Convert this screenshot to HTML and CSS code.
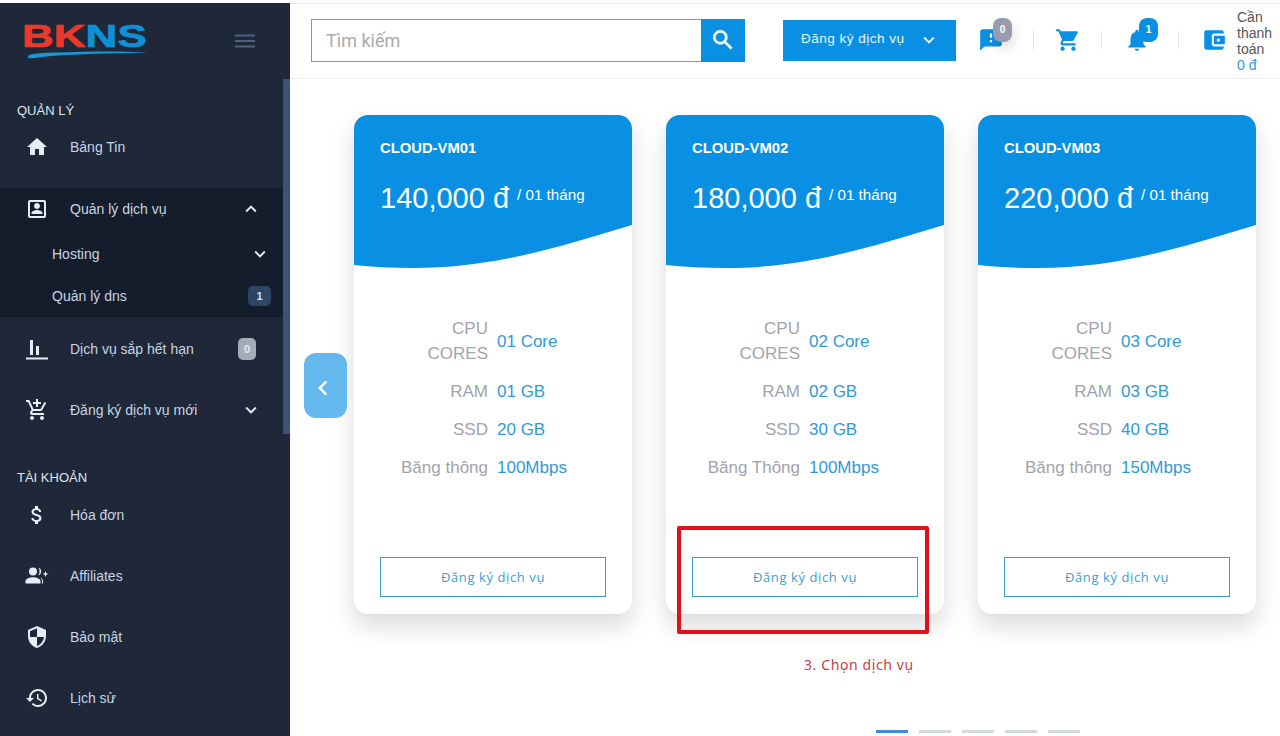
FILE: index.html
```html
<!DOCTYPE html>
<html lang="en">
  <head>
    <meta charset="UTF-8" />
    <meta name="viewport" content="width=device-width, initial-scale=1.0" />
    <title>BKNS | Đăng ký dịch vụ</title>
    <link rel="stylesheet" href="styles.css">
  </head>
  <body>
    <div class="page">
      <aside class="sidebar">
        <div class="scroll-thumb"></div>
        <div class="brand">
          <div class="logo">
            <div class="logo-text"><span class="logo-red">BK</span><span class="logo-blue">NS</span></div>
            <svg class="logo-swoosh" viewBox="0 0 122 9"><path d="M2 8 C1 4 8 3 30 2.500 C60 1.500 95 0.500 122 3 C90 3 50 4 25 6 C12 7.500 4 9 2 8 Z" fill="#1597d8"/></svg>
          </div>
          <svg class="burger" viewBox="0 0 20 14"><path d="M0 1.500h20M0 7h20M0 12.500h20" stroke="#4f6280" stroke-width="2"/></svg>
        </div>

        <div class="section-title first">QUẢN LÝ</div>
        <a class="item item-home">
          <svg class="icon" viewBox="0 0 24 24"><path d="M10 20v-6h4v6h5v-8h3L12 3 2 12h3v8z"/></svg>
          <span>Bảng Tin</span>
        </a>

        <div class="group">
          <a class="item item-parent">
            <svg class="icon" viewBox="0 0 24 24"><path d="M19 5v14H5V5h14m0-2H5c-1.110 0-2 .9-2 2v14c0 1.100.89 2 2 2h14c1.100 0 2-.9 2-2V5c0-1.100-.9-2-2-2zm-7 9c1.650 0 3-1.350 3-3s-1.350-3-3-3-3 1.350-3 3 1.350 3 3 3zm-5.500 5h11v-1c0-2-3.700-3-5.500-3s-5.500 1-5.500 3v1z"/></svg>
            <span>Quản lý dịch vụ</span>
            <svg class="chevron" viewBox="0 0 24 24"><path d="M7.410 15.410 12 10.830l4.590 4.580L18 14l-6-6-6 6z"/></svg>
          </a>
          <a class="sub-item">
            <span>Hosting</span>
            <svg class="chevron" viewBox="0 0 24 24"><path d="M7.410 8.590 12 13.170l4.590-4.580L18 10l-6 6-6-6z"/></svg>
          </a>
          <a class="sub-item">
            <span>Quản lý dns</span>
            <span class="count count-dark">1</span>
          </a>
        </div>

        <a class="item item-expire">
          <svg class="icon" viewBox="0 0 24 24"><path d="M5 3h3v15H5zM11 9h3v9h-3zM1 20.500h22v2H1z"/></svg>
          <span>Dịch vụ sắp hết hạn</span>
          <span class="count count-grey">0</span>
        </a>
        <a class="item">
          <svg class="icon" viewBox="0 0 24 24"><path d="M11 9h2V6h3V4h-3V1h-2v3H8v2h3v3zm-4 9c-1.100 0-1.990.9-1.990 2S5.900 22 7 22s2-.9 2-2-.9-2-2-2zm10 0c-1.100 0-1.990.9-1.990 2s.89 2 1.990 2 2-.9 2-2-.9-2-2-2zm-9.830-3.250.03-.12.9-1.630h7.450c.75 0 1.410-.41 1.750-1.030l3.860-7.010L19.420 4h-.01l-1.100 2-2.760 5H8.530l-.13-.27L6.160 6l-.95-2-.94-2H1v2h2l3.600 7.590-1.350 2.450c-.16.28-.25.61-.25.96 0 1.100.9 2 2 2h12v-2H7.420c-.13 0-.25-.11-.25-.25z"/></svg>
          <span>Đăng ký dịch vụ mới</span>
          <svg class="chevron" viewBox="0 0 24 24"><path d="M7.410 8.590 12 13.170l4.590-4.580L18 10l-6 6-6-6z"/></svg>
        </a>

        <div class="section-title section-account">TÀI KHOẢN</div>
        <a class="item">
          <svg class="icon" viewBox="0 0 24 24"><path d="M11.800 10.900c-2.270-.59-3-1.200-3-2.150 0-1.090 1.010-1.850 2.700-1.850 1.780 0 2.440.85 2.500 2.100h2.210c-.07-1.720-1.120-3.300-3.210-3.810V3h-3v2.160c-1.940.42-3.500 1.680-3.500 3.610 0 2.310 1.910 3.460 4.700 4.130 2.500.6 3 1.480 3 2.410 0 .69-.49 1.790-2.700 1.790-2.060 0-2.870-.92-2.980-2.100h-2.200c.12 2.190 1.760 3.420 3.680 3.830V21h3v-2.150c1.950-.37 3.500-1.500 3.500-3.550 0-2.840-2.430-3.810-4.700-4.400z"/></svg>
          <span>Hóa đơn</span>
        </a>
        <a class="item">
          <svg class="icon" viewBox="0 0 24 24"><path d="M8 11.500a4 4 0 1 0 0-8 4 4 0 0 0 0 8zm0 1.800c-2.700 0-7.500 1.300-7.500 3.800v2.400h15v-2.400c0-2.500-4.800-3.800-7.500-3.800zM13 3.600a4 4 0 0 1 0 7.800c2-.4 2-7.400 0-7.800zM15 13.500c2 .6 3 1.900 3 3.600v2.400h-1v-2.400c0-1.500-.8-2.700-2-3.600zM20.500 7l.8 2.200 2.200.8-2.200.8-.8 2.200-.8-2.200-2.200-.8 2.200-.8z"/></svg>
          <span>Affiliates</span>
        </a>
        <a class="item">
          <svg class="icon" viewBox="0 0 24 24"><path d="M12 1 3 5v6c0 5.550 3.840 10.740 9 12 5.160-1.260 9-6.450 9-12V5l-9-4zm0 10.990h7c-.53 4.120-3.280 7.790-7 8.940V12H5V6.300l7-3.110v8.800z"/></svg>
          <span>Bảo mật</span>
        </a>
        <a class="item">
          <svg class="icon" viewBox="0 0 24 24"><path d="M13 3c-4.970 0-9 4.030-9 9H1l3.890 3.890.07.14L9 12H6c0-3.870 3.130-7 7-7s7 3.130 7 7-3.130 7-7 7c-1.930 0-3.680-.79-4.940-2.060l-1.420 1.420C8.270 19.990 10.510 21 13 21c4.970 0 9-4.030 9-9s-4.030-9-9-9zm-1 5v5l4.280 2.540.72-1.210-3.500-2.080V8H12z"/></svg>
          <span>Lịch sử</span>
        </a>
      </aside>

      <main class="main">
        <header class="topbar">
          <div class="search">
            <input class="search-input" type="text" placeholder="Tìm kiếm" />
            <button class="search-button">
              <svg viewBox="0 0 24 24"><path d="M15.500 14h-.79l-.28-.27A6.471 6.471 0 0 0 16 9.500 6.500 6.500 0 1 0 9.500 16c1.610 0 3.090-.59 4.230-1.570l.27.28v.79l5 4.990L20.490 19l-4.990-5zm-6 0C7.010 14 5 11.990 5 9.500S7.010 5 9.500 5 14 7.010 14 9.500 11.990 14 9.500 14z"/></svg>
            </button>
          </div>
          <button class="service-button">
            <span>Đăng ký dịch vụ</span>
            <svg viewBox="0 0 24 24"><path d="M7.410 8.590 12 13.170l4.590-4.580L18 10l-6 6-6-6z"/></svg>
          </button>

          <div class="tool tool-chat">
            <svg viewBox="0 0 24 24"><path d="M20 2H4c-1.100 0-1.990.9-1.990 2L2 22l4-4h14c1.100 0 2-.9 2-2V4c0-1.100-.9-2-2-2zm-7 12h-2v-2h2v2zm0-4h-2V6h2v4z"/></svg>
            <span class="tool-badge badge-grey">0</span>
          </div>
          <div class="divider divider-chat"></div>
          <div class="tool tool-cart">
            <svg viewBox="0 0 24 24"><path d="M7 18c-1.100 0-1.990.9-1.990 2S5.900 22 7 22s2-.9 2-2-.9-2-2-2zM1 2v2h2l3.600 7.590-1.350 2.450c-.16.28-.25.61-.25.96 0 1.100.9 2 2 2h12v-2H7.420c-.14 0-.25-.11-.25-.25l.03-.12.9-1.630h7.450c.75 0 1.410-.41 1.750-1.030l3.580-6.490c.08-.14.12-.31.12-.48 0-.55-.45-1-1-1H5.210l-.94-2H1zm16 16c-1.100 0-1.990.9-1.990 2s.89 2 1.990 2 2-.9 2-2-.9-2-2-2z"/></svg>
          </div>
          <div class="divider divider-cart"></div>
          <div class="tool tool-bell">
            <svg viewBox="0 0 24 24"><path d="M12 22c1.100 0 2-.9 2-2h-4c0 1.100.89 2 2 2zm6-6v-5c0-3.070-1.640-5.640-4.500-6.320V4c0-.83-.67-1.500-1.500-1.500s-1.500.67-1.500 1.500v.68C7.630 5.360 6 7.920 6 11v5l-2 2v1h16v-1l-2-2z"/></svg>
            <span class="tool-badge badge-blue">1</span>
          </div>
          <div class="divider divider-bell"></div>
          <div class="tool tool-wallet">
            <svg viewBox="0 0 24 24"><path d="M21 18v1c0 1.100-.9 2-2 2H5c-1.110 0-2-.9-2-2V5c0-1.100.89-2 2-2h14c1.100 0 2 .9 2 2v1h-9c-1.110 0-2 .9-2 2v8c0 1.100.89 2 2 2h9zm-9-2h10V8H12v8zm4-2.500c-.83 0-1.500-.67-1.500-1.500s.67-1.500 1.500-1.500 1.500.67 1.500 1.500-.67 1.500-1.500 1.500z"/></svg>
          </div>
          <div class="balance">
            <div>Cần thanh toán</div>
            <div class="balance-value">0 đ</div>
          </div>
        </header>

        <section class="slider">
          <button class="slider-prev">
            <svg viewBox="0 0 24 24"><path d="M15.410 7.410 14 6l-6 6 6 6 1.410-1.410L10.830 12z"/></svg>
          </button>

          <div class="cards">
            <div class="card">
              <div class="card-head">
                <svg class="wave" viewBox="0 0 278 153" preserveAspectRatio="none"><path d="M0 0H278V110C205 132 140 153 60 153C38 153 18 152 0 150Z"/></svg>
                <div class="card-title">
                  <h3>CLOUD-VM01</h3>
                  <div class="price"><span class="amount">140,000 đ</span><span class="period">/ 01 tháng</span></div>
                </div>
              </div>
              <div class="specs">
                <div class="spec-name">CPU CORES</div><div class="spec-value">01 Core</div>
                <div class="spec-name">RAM</div><div class="spec-value">01 GB</div>
                <div class="spec-name">SSD</div><div class="spec-value">20 GB</div>
                <div class="spec-name">Băng thông</div><div class="spec-value">100Mbps</div>
              </div>
              <a class="card-button">Đăng ký dịch vụ</a>
            </div>

            <div class="card">
              <div class="card-head">
                <svg class="wave" viewBox="0 0 278 153" preserveAspectRatio="none"><path d="M0 0H278V110C205 132 140 153 60 153C38 153 18 152 0 150Z"/></svg>
                <div class="card-title">
                  <h3>CLOUD-VM02</h3>
                  <div class="price"><span class="amount">180,000 đ</span><span class="period">/ 01 tháng</span></div>
                </div>
              </div>
              <div class="specs">
                <div class="spec-name">CPU CORES</div><div class="spec-value">02 Core</div>
                <div class="spec-name">RAM</div><div class="spec-value">02 GB</div>
                <div class="spec-name">SSD</div><div class="spec-value">30 GB</div>
                <div class="spec-name">Băng Thông</div><div class="spec-value">100Mbps</div>
              </div>
              <a class="card-button">Đăng ký dịch vụ</a>
            </div>

            <div class="card">
              <div class="card-head">
                <svg class="wave" viewBox="0 0 278 153" preserveAspectRatio="none"><path d="M0 0H278V110C205 132 140 153 60 153C38 153 18 152 0 150Z"/></svg>
                <div class="card-title">
                  <h3>CLOUD-VM03</h3>
                  <div class="price"><span class="amount">220,000 đ</span><span class="period">/ 01 tháng</span></div>
                </div>
              </div>
              <div class="specs">
                <div class="spec-name">CPU CORES</div><div class="spec-value">03 Core</div>
                <div class="spec-name">RAM</div><div class="spec-value">03 GB</div>
                <div class="spec-name">SSD</div><div class="spec-value">40 GB</div>
                <div class="spec-name">Băng thông</div><div class="spec-value">150Mbps</div>
              </div>
              <a class="card-button">Đăng ký dịch vụ</a>
            </div>
          </div>

          <div class="dots">
            <span class="dot active"></span>
            <span class="dot"></span>
            <span class="dot"></span>
            <span class="dot"></span>
            <span class="dot"></span>
          </div>

          <!-- annotation drawn over the screenshot -->
          <div class="mark"></div>
          <div class="mark-label">3. Chọn dịch vụ</div>
        </section>
      </main>
    </div>
  </body>
</html>
```

FILE: styles.css
```css
* {
  padding: 0;
  margin: 0;
  box-sizing: border-box;
}
html,
body {
  height: 100%;
  overflow: hidden;
}
body {
  background: #fff;
  font-family: "Liberation Sans", Arial, sans-serif;
}
.page {
  display: flex;
  height: 736px;
  padding-top: 3px;
  background: #fff;
}

/* sidebar */
.sidebar {
  position: relative;
  width: 290px;
  flex-shrink: 0;
  background: #1e2838;
  color: #c9d4e4;
  font-size: 14px;
  overflow: hidden;
}
.scroll-thumb {
  position: absolute;
  top: 76px;
  right: 0;
  width: 7px;
  height: 355px;
  background: #3d5274;
}
.brand {
  height: 76px;
  padding: 20px 0 0 22px;
  display: flex;
  align-items: flex-start;
  justify-content: space-between;
}
.logo {
  width: 124px;
}
.logo-text {
  font-size: 31px;
  font-weight: 700;
  line-height: 27px;
  transform: scaleX(1.42);
  transform-origin: left;
  white-space: nowrap;
  -webkit-text-stroke: 0.7px currentColor;
}
.logo-red {
  color: #e8392a;
}
.logo-blue {
  color: #0f90d6;
}
.logo-swoosh {
  display: block;
  width: 122px;
  height: 9px;
  margin: 0 0 0 4px;
}
.burger {
  width: 20px;
  height: 14px;
  margin: 11px 35px 0 0;
}
.section-title {
  height: 18px;
  line-height: 18px;
  padding-left: 17px;
  font-size: 13px;
  color: #dfe5ee;
}
.section-title.first {
  margin-top: 23px;
}
.section-account {
  margin-top: 29px;
  margin-bottom: -3px;
}
.item {
  display: flex;
  align-items: center;
  height: 61px;
  padding: 0 28px 0 25px;
}
.item-home {
  margin-top: -4px;
  margin-bottom: 11px;
}
.item-parent {
  height: 45px;
  padding-bottom: 3px;
}
.item-expire {
  margin-top: 1px;
  padding-right: 34px;
}
.icon {
  width: 24px;
  height: 24px;
  margin-right: 21px;
  fill: #e6edf7;
  flex-shrink: 0;
}
.chevron {
  width: 22px;
  height: 22px;
  margin-left: auto;
  fill: #e6edf7;
  flex-shrink: 0;
}
.group {
  background: #141d2b;
}
.sub-item {
  display: flex;
  align-items: center;
  height: 42px;
  padding: 0 19px 0 52px;
}
.count {
  margin-left: auto;
  font-size: 11px;
  font-weight: 700;
  text-align: center;
  border-radius: 5px;
}
.count-dark {
  width: 23px;
  height: 20px;
  line-height: 20px;
  background: #2e4566;
  color: #d6e0ee;
}
.count-grey {
  width: 18px;
  height: 22px;
  line-height: 22px;
  background: #a6abbb;
  color: #e6e8ee;
}

/* top bar */
.main {
  flex: 1;
  min-width: 0;
  border-top: 1px solid #eee;
}
.topbar {
  display: flex;
  align-items: center;
  height: 75px;
  padding: 0 0 2px 21px;
  border-bottom: 1px solid #eee;
  overflow: hidden;
}
.search {
  display: flex;
  width: 434px;
  height: 43px;
  flex-shrink: 0;
}
.search-input {
  flex: 1;
  min-width: 0;
  border: 1px solid #4fa8e6;
  border-right: 0;
  border-radius: 0;
  padding-left: 14px;
  font-family: Roboto, sans-serif;
  font-size: 18px;
  outline: none;
}
.search-input::placeholder {
  color: #ababab;
}
.search-button {
  width: 44px;
  border: none;
  background: #0a90e3;
  display: flex;
  align-items: center;
  justify-content: center;
}
.search-button svg {
  width: 26px;
  height: 26px;
  fill: #fff;
  stroke: #fff;
  stroke-width: 0.5;
}
.service-button {
  width: 173px;
  height: 41px;
  margin-left: 38px;
  flex-shrink: 0;
  border: none;
  background: #0a90e3;
  color: #eaf5fd;
  font-family: "Liberation Sans", Arial, sans-serif;
  font-size: 13.500px;
  letter-spacing: 0.5px;
  display: flex;
  align-items: center;
  padding: 0 16px 3px 18px;
  justify-content: space-between;
}
.service-button svg {
  width: 22px;
  height: 22px;
  fill: #eaf5fd;
  margin-top: 3px;
}
.tool {
  position: relative;
  width: 26px;
  height: 26px;
  flex-shrink: 0;
}
.tool svg {
  display: block;
  width: 26px;
  height: 26px;
  fill: #0a90e3;
}
.tool-badge {
  position: absolute;
  top: -9px;
  left: 15px;
  width: 19px;
  height: 24px;
  line-height: 23px;
  border-radius: 8px;
  color: #fff;
  font-size: 10px;
  font-weight: 700;
  text-align: center;
}
.badge-grey {
  background: #9a9cad;
  box-shadow: 2px 6px 12px rgba(0, 0, 0, 0.12);
}
.badge-blue {
  background: #0a90e3;
}
.tool-chat {
  margin-left: 22px;
}
.tool-cart {
  margin-left: 21px;
}
.tool-bell {
  margin-left: 22px;
}
.tool-wallet {
  margin-left: 22px;
}
.divider {
  width: 1px;
  height: 20px;
  background: #e8e8e8;
  flex-shrink: 0;
}
.divider-chat {
  margin-left: 29px;
}
.divider-cart {
  margin-left: 20px;
}
.divider-bell {
  margin-left: 28px;
}
.balance {
  width: 42px;
  margin-left: 10px;
  margin-top: 2px;
  flex-shrink: 0;
  font-size: 14px;
  line-height: 16px;
  color: #555;
}
.balance-value {
  color: #2f9ad8;
}

/* slider */
.slider {
  position: relative;
  padding: 36px 0 0 64px;
}
.slider-prev {
  position: absolute;
  top: 274px;
  left: 14px;
  width: 43px;
  height: 65px;
  border: none;
  border-radius: 12px;
  background: #64b8ee;
  display: flex;
  align-items: center;
  justify-content: center;
  padding: 4px 5px 0 0;
}
.slider-prev svg {
  width: 30px;
  height: 30px;
  fill: #fff;
}
.cards {
  display: flex;
  gap: 34px;
}
.card {
  width: 278px;
  height: 499px;
  background: #fff;
  border-radius: 14px;
  box-shadow: 0 12px 24px rgba(0, 0, 0, 0.15);
  overflow: hidden;
  flex-shrink: 0;
}
.card-head {
  position: relative;
  height: 153px;
  color: #fff;
}
.wave {
  position: absolute;
  inset: 0;
  width: 100%;
  height: 100%;
  fill: #0a90e3;
}
.card-title {
  position: relative;
  padding: 25px 26px 0;
}
.card-title h3 {
  font-size: 14.800px;
  line-height: 16px;
  font-weight: 700;
}
.price {
  display: flex;
  align-items: flex-start;
  margin-top: 25px;
}
.amount {
  font-size: 29px;
  line-height: 34px;
  white-space: nowrap;
}
.period {
  font-size: 15.200px;
  line-height: 20px;
  margin: 4px 0 0 8px;
  white-space: nowrap;
}
.specs {
  display: grid;
  grid-template-columns: 134px 1fr;
  column-gap: 9px;
  row-gap: 13px;
  align-items: center;
  margin-top: 48px;
  font-size: 17px;
  line-height: 25px;
}
.spec-name {
  color: #a1a3ad;
  text-align: right;
  padding-left: 46px;
}
.spec-name:nth-last-child(2) {
  padding-left: 0;
  white-space: nowrap;
}
.spec-value {
  color: #2f9ad8;
}
.card-button {
  display: block;
  width: 226px;
  height: 40px;
  margin: 77px 0 0 26px;
  border: 1px solid #3a9fd0;
  color: #3a9fd0;
  text-align: center;
  line-height: 38px;
  font-family: "Open Sans", sans-serif;
  font-size: 13px;
  letter-spacing: 0.6px;
}
.dots {
  display: flex;
  justify-content: flex-end;
  gap: 11px;
  margin-top: 116px;
  padding-right: 200px;
}
.dot {
  width: 32px;
  height: 3px;
  background: #d5d8dd;
}
.dot.active {
  background: #3c8ddc;
}
.mark {
  position: absolute;
  top: 447px;
  left: 387px;
  width: 252px;
  height: 108px;
  border: 4px solid #e2101a;
  border-radius: 2px;
}
.mark-label {
  position: absolute;
  top: 576px;
  left: 514px;
  color: #c5414a;
  font-family: "Noto Sans", sans-serif;
  font-size: 14px;
  letter-spacing: 0.6px;
  white-space: nowrap;
}
```
